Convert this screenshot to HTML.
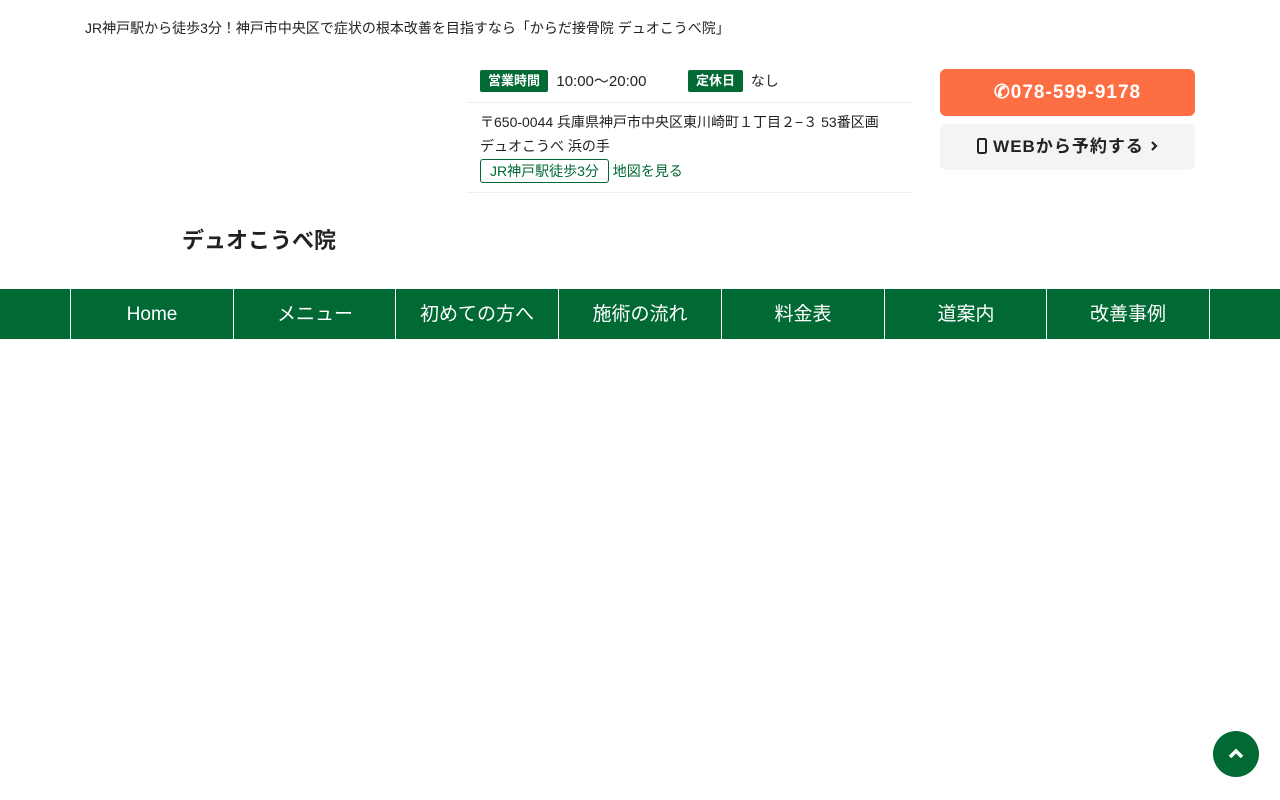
<!DOCTYPE html>
<html lang="ja"><head><meta charset="utf-8"><style>
*{margin:0;padding:0;box-sizing:border-box}
body{width:1280px;height:800px;background:#fff;font-family:"Liberation Sans","Noto Sans CJK JP",sans-serif;color:#222;position:relative;overflow:hidden}
.a{position:absolute}
.tag{display:inline-block;background:#006934;color:#fff;font-size:13px;font-weight:bold;padding:0 8px;height:22px;line-height:22px;border-radius:2px;vertical-align:1px}
nav{position:absolute;left:0;top:289px;width:1280px;height:50px;background:#006934}
nav div{position:absolute;top:0;height:50px;line-height:52px;color:#fff;font-size:19px;text-align:center;border-left:1px solid #fff;width:163px}
</style></head><body>
<div class="a" style="left:85px;top:18px;font-size:14px">JR神戸駅から徒歩3分！神戸市中央区で症状の根本改善を目指すなら「からだ接骨院 デュオこうべ院」</div>
<div class="a" style="left:480px;top:70px;font-size:15px;line-height:22px"><span class="tag">営業時間</span>&nbsp; 10:00〜20:00</div>
<div class="a" style="left:688px;top:70px;font-size:14px;line-height:22px"><span class="tag">定休日</span>&nbsp; なし</div>
<div class="a" style="left:466px;top:102px;width:446px;border-top:1px solid #eee"></div>
<div class="a" style="left:480px;top:110px;width:415px;font-size:14px;line-height:24px">〒650-0044 兵庫県神戸市中央区東川崎町１丁目２−３ 53番区画 デュオこうべ 浜の手</div>
<div class="a" style="left:480px;top:159px;font-size:14px;line-height:22px;color:#006934"><span style="display:inline-block;border:1px solid #006934;border-radius:3px;padding:0 9px;height:24px;line-height:22px">JR神戸駅徒歩3分</span> 地図を見る</div>
<div class="a" style="left:466px;top:192px;width:446px;border-top:1px solid #eee"></div>
<div class="a" style="left:940px;top:69px;width:255px;height:47px;background:#fd6e43;border-radius:6px;color:#fff;font-weight:bold;font-size:19px;text-align:center;line-height:47px;letter-spacing:1px">✆078-599-9178</div>
<div class="a" style="left:940px;top:124px;width:255px;height:46px;background:#f4f4f4;border-radius:6px;color:#222;font-weight:bold;font-size:17px;text-align:center;line-height:46px;letter-spacing:1px"><svg width="10" height="16" viewBox="0 0 10 16" style="vertical-align:-2px"><rect x="1" y="1" width="8" height="14" rx="1.5" fill="none" stroke="#222" stroke-width="2"/></svg> WEBから予約する <svg width="8" height="12" viewBox="0 0 8 12"><path d="M2 2l4 4-4 4" fill="none" stroke="#222" stroke-width="2.2"/></svg></div>
<div class="a" style="left:182px;top:223px;font-size:22px;font-weight:bold">デュオこうべ院</div>
<nav>
<div style="left:70px">Home</div><div style="left:233px">メニュー</div><div style="left:395px">初めての方へ</div><div style="left:558px">施術の流れ</div><div style="left:721px">料金表</div><div style="left:884px">道案内</div><div style="left:1046px">改善事例</div><div style="left:1209px;width:1px"></div>
</nav>
<div class="a" style="left:1213px;top:731px;width:46px;height:46px;border-radius:50%;background:#006934"><svg width="46" height="46" viewBox="0 0 46 46"><path d="M17 26l6-6 6 6" fill="none" stroke="#fff" stroke-width="3.5"/></svg></div>
</body></html>
